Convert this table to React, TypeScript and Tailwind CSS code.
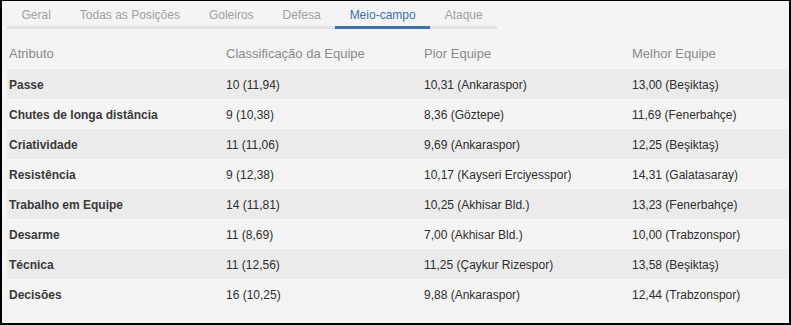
const tabs = ["Geral", "Todas as Posições", "Goleiros", "Defesa", "Meio-campo", "Ataque"];

const rows = [
  ["Passe", "10 (11,94)", "10,31 (Ankaraspor)", "13,00 (Beşiktaş)"],
  ["Chutes de longa distância", "9 (10,38)", "8,36 (Göztepe)", "11,69 (Fenerbahçe)"],
  ["Criatividade", "11 (11,06)", "9,69 (Ankaraspor)", "12,25 (Beşiktaş)"],
  ["Resistência", "9 (12,38)", "10,17 (Kayseri Erciyesspor)", "14,31 (Galatasaray)"],
  ["Trabalho em Equipe", "14 (11,81)", "10,25 (Akhisar Bld.)", "13,23 (Fenerbahçe)"],
  ["Desarme", "11 (8,69)", "7,00 (Akhisar Bld.)", "10,00 (Trabzonspor)"],
  ["Técnica", "11 (12,56)", "11,25 (Çaykur Rizespor)", "13,58 (Beşiktaş)"],
  ["Decisões", "16 (10,25)", "9,88 (Ankaraspor)", "12,44 (Trabzonspor)"],
];

export default function App() {
  return (
    <div className="w-[791px] h-[325px] bg-[#f4f4f4] border-2 border-t border-black pl-[5px] font-['Liberation_Sans',Arial,sans-serif] text-[12px] overflow-hidden">
      {/* Tabs */}
      <div className="flex">
        {tabs.map((t) => (
          <div
            key={t}
            className={
              t === "Meio-campo"
                ? "px-[14.5px] pt-[6px] pb-[3px] leading-4 border-b-[3px] border-[#3a70b9] text-[#3a70b9]"
                : "px-[14.5px] pt-[6px] pb-[3px] leading-4 border-b-[3px] border-[#e2e2e2] text-[#a0a0a0]"
            }
          >
            {t}
          </div>
        ))}
      </div>

      {/* Table */}
      <div className="mt-[10px]">
        <div className="grid grid-cols-[217px_198px_208px_1fr] h-[30px] items-center text-[13px] text-[#8a8a8a]">
          <div className="pl-[2px]">Atributo</div>
          <div className="pl-[2px]">Classificação da Equipe</div>
          <div className="pl-[2px]">Pior Equipe</div>
          <div className="pl-[2px]">Melhor Equipe</div>
        </div>
        {rows.map((r, i) => (
          <div
            key={r[0]}
            className={
              "grid grid-cols-[217px_198px_208px_1fr] h-[30px] pt-[1px] items-center text-[#2e2e2e] " +
              (i % 2 === 0 ? "bg-[#ebebeb]" : "bg-[#f4f4f4]")
            }
          >
            <div className="pl-[2px] font-bold text-[#3a3a3a]">{r[0]}</div>
            <div className="pl-[2px]">{r[1]}</div>
            <div className="pl-[2px]">{r[2]}</div>
            <div className="pl-[2px]">{r[3]}</div>
          </div>
        ))}
      </div>
    </div>
  );
}
